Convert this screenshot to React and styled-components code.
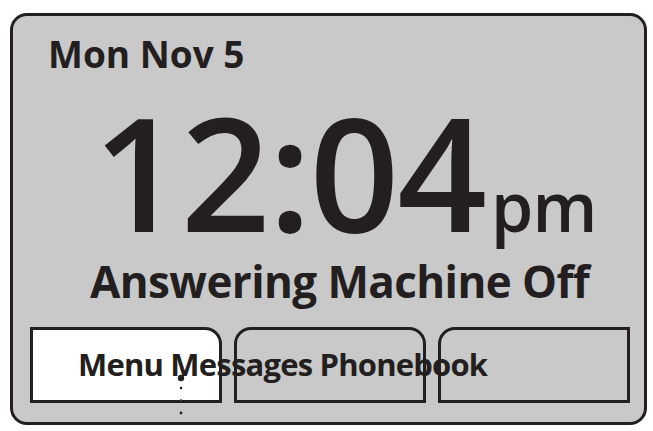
import React from 'react';
import styled, { createGlobalStyle } from 'styled-components';

const GlobalStyle = createGlobalStyle`
  html, body {
    margin: 0;
    padding: 0;
    background: #fff;
  }
  body {
    font-family: 'Open Sans', 'Noto Sans', sans-serif;
    color: #231f20;
  }
`;

const Screen = styled.div`
  box-sizing: border-box;
  width: 637px;
  height: 412px;
  margin: 13px 0 0 10px;
  border: 3px solid #231f20;
  border-radius: 17px;
  background-color: #c9c9c9;
  display: flex;
  flex-direction: column;
  overflow: visible;
`;

const DateLine = styled.div`
  margin: 18px 0 0 35px;
  font-size: 37px;
  line-height: 40px;
  font-weight: 700;
  letter-spacing: 0;
`;

const TimeRow = styled.div`
  display: flex;
  align-items: baseline;
  margin: 32px 0 0 80px;
  height: 130px;
`;

const Clock = styled.span`
  font-size: 157px;
  line-height: 130px;
  font-weight: 650;
  letter-spacing: -2px;
`;

const Meridiem = styled.span`
  font-size: 68px;
  line-height: 1;
  font-weight: 600;
  margin-left: 6px;
  letter-spacing: -1px;
`;

const Status = styled.div`
  margin: 21px 0 0 77px;
  font-size: 44px;
  line-height: 48px;
  font-weight: 700;
  letter-spacing: -0.6px;
`;

const TabArea = styled.div`
  position: relative;
  display: flex;
  gap: 12px;
  margin-top: 22px;
  padding: 0 14px 0 17px;
`;

const Tab = styled.div`
  box-sizing: border-box;
  width: 192px;
  height: 76px;
  border: 3px solid #231f20;
  background-color: ${props => (props.active ? '#fff' : '#c9c9c9')};
  border-top-left-radius: ${props => (props.roundLeft ? '17px' : '0')};
  border-top-right-radius: ${props => (props.roundRight ? '17px' : '0')};
`;

const TabLabel = styled.div`
  position: absolute;
  left: 65px;
  top: 22px;
  font-size: 31px;
  line-height: 31px;
  font-weight: 700;
  letter-spacing: -0.8px;
  white-space: nowrap;
`;

const Pointer = styled.svg`
  position: absolute;
  left: 164px;
  top: 46px;
  overflow: visible;
`;

export default function App() {
  return (
    <>
      <GlobalStyle />
      <Screen>
        <DateLine>Mon Nov 5</DateLine>
        <TimeRow>
          <Clock>12:04</Clock>
          <Meridiem>pm</Meridiem>
        </TimeRow>
        <Status>Answering Machine Off</Status>
        <TabArea>
          <Tab active roundRight />
          <Tab roundLeft roundRight />
          <Tab roundLeft />
          <TabLabel>Menu Messages Phonebook</TabLabel>
          <Pointer width="8" height="60" viewBox="0 0 8 60">
            <circle cx="4" cy="5" r="3.2" fill="#231f20" />
            <circle cx="4" cy="15" r="1.3" fill="#231f20" />
            <circle cx="4" cy="27" r="1" fill="#555" />
            <circle cx="4" cy="40" r="1.4" fill="#231f20" />
            <circle cx="4" cy="54" r="1.4" fill="#231f20" />
          </Pointer>
        </TabArea>
      </Screen>
    </>
  );
}
